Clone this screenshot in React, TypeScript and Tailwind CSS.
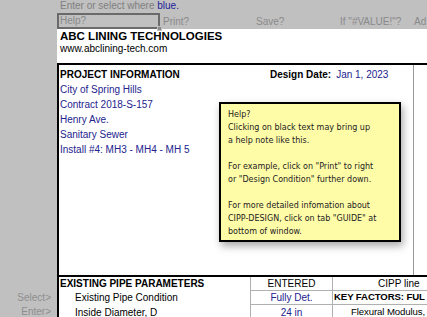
import React from 'react';

const blue = 'text-[#23238e]';

const App: React.FC = () => {
  return (
    <div className="relative w-[427px] h-[317px] overflow-hidden bg-[#c0c0c0] flex flex-col font-['Liberation_Sans',Arial,sans-serif] text-[10px] text-black">
      {/* toolbar rows */}
      <div className="h-[29px] pl-[57px] flex flex-col shrink-0">
        <div className="h-[13px] pl-[3px] leading-[11px] text-[#7f7f7f]">
          Enter or select where <span className="text-[#1c1c9a]">blue.</span>
        </div>
        <div className="h-[16px] flex items-center text-[#8a8a8a]">
          <div className="relative w-[103px] h-[16px] border-2 border-[#6a6a6a] pl-[1px] leading-[12px]">
            Help?
            <div className="absolute -right-[4px] -bottom-[4px] w-[5px] h-[5px] bg-[#8a8a8a] border border-[#c0c0c0]" />
          </div>
          <span className="ml-[3px] w-[93px]">Print?</span>
          <span className="w-[84px]">Save?</span>
          <span className="w-[74px]">If "#VALUE!"?</span>
          <span>Ad</span>
        </div>
      </div>

      <div className="flex-1 flex">
        {/* left gray column */}
        <div className="w-[57px] shrink-0 flex flex-col justify-end pb-[1px] text-right pr-[6px] text-[#8e8e8e] leading-[14px]">
          <div>Select&gt;</div>
          <div>Enter&gt;</div>
        </div>

        {/* sheet */}
        <div className="flex-1 bg-white flex flex-col">
          <div className="h-[34px] pl-[3px] pt-[1px] shrink-0">
            <div className="text-[11.5px] font-bold leading-[13px]">ABC LINING TECHNOLOGIES</div>
            <div className="leading-[11px]">www.abclining-tech.com</div>
          </div>

          <div className="h-[212px] border-t-2 border-t-black border-l-2 border-l-black flex shrink-0">
            <div className="w-[354px] pl-[1px] pt-[2px] flex flex-col">
              <div className="h-[15px] flex items-center">
                <span className="font-bold w-[210px]">PROJECT INFORMATION</span>
                <span className="font-bold">Design Date:</span>
                <span className={`ml-[5px] ${blue}`}>Jan 1, 2023</span>
              </div>
              <div className={`h-[15px] flex items-center ${blue}`}>City of Spring Hills</div>
              <div className={`h-[15px] flex items-center ${blue}`}>Contract 2018-S-157</div>
              <div className={`h-[15px] flex items-center ${blue}`}>Henry Ave.</div>
              <div className={`h-[15px] flex items-center ${blue}`}>Sanitary Sewer</div>
              <div className={`h-[15px] flex items-center ${blue}`}>Install #4: MH3 - MH4 - MH 5</div>
            </div>
            <div className="flex-1 border-l border-l-[#9a9a9a]" />
          </div>

          <div className="flex-1 border-t-2 border-t-black border-l-2 border-l-black flex flex-col">
            <div className="h-[13px] flex items-center">
              <span className="w-[191px] pl-[1px] font-bold">EXISTING PIPE PARAMETERS</span>
              <span className="w-[82px] h-full border-l border-l-[#b0b0b0] flex items-center justify-center">ENTERED</span>
              <span className="flex-1 h-full border-l border-l-[#b0b0b0] pl-[45px] flex items-center whitespace-nowrap">CIPP line</span>
            </div>
            <div className="h-[14px] flex items-center border-t border-t-[#b0b0b0] ml-[191px] relative">
              <span className="absolute -left-[175px] whitespace-nowrap">Existing Pipe Condition</span>
              <span className={`w-[82px] h-full border-l border-l-[#b0b0b0] flex items-center justify-center ${blue}`}>Fully Det.</span>
              <span className="flex-1 h-full border-l border-l-[#b0b0b0] pl-[1px] flex items-center font-bold whitespace-nowrap text-[9.6px] tracking-[-0.1px]">KEY FACTORS: FUL</span>
            </div>
            <div className="flex-1 flex items-center border-t border-t-[#b0b0b0] ml-[191px] relative">
              <span className="absolute -left-[175px] whitespace-nowrap">Inside Diameter, D</span>
              <span className={`w-[82px] h-full border-l border-l-[#b0b0b0] flex items-center justify-center ${blue}`}>24 in</span>
              <span className="flex-1 h-full border-l border-l-[#b0b0b0] pl-[18px] flex items-center whitespace-nowrap text-[9.6px] tracking-[-0.1px]">Flexural Modulus,</span>
            </div>
          </div>
        </div>
      </div>

      {/* help note */}
      <div className="absolute left-[219px] top-[102px] w-[182px] h-[140px] bg-[#fffca8] border-2 border-black shadow-[2px_4px_8px_rgba(0,0,0,0.35)] pl-[7px] pt-[4px] font-['DejaVu_Sans',sans-serif] text-[8px] leading-[13px] text-[#222]">
        <div>Help?</div>
        <div>Clicking on black text may bring up</div>
        <div>a help note like this.</div>
        <div className="h-[13px]" />
        <div>For example, click on "Print" to right</div>
        <div>or "Design Condition" further down.</div>
        <div className="h-[13px]" />
        <div>For more detailed infomation about</div>
        <div>CIPP-DESIGN, click on tab "GUIDE" at</div>
        <div>bottom of window.</div>
      </div>
    </div>
  );
};

export default App;
